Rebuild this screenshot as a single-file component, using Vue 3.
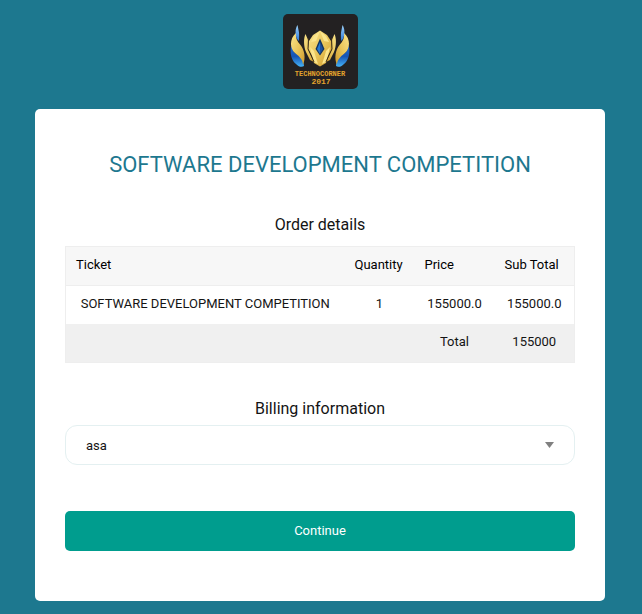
<script setup>
import { ref } from 'vue'

const items = [
  { ticket: 'SOFTWARE DEVELOPMENT COMPETITION', quantity: 1, price: '155000.0', subTotal: '155000.0' }
]
const total = '155000'
const billing = ref('asa')
</script>

<template>
  <main class="page">
    <svg class="logo" viewBox="0 0 75 75" role="img" aria-label="Technocorner 2017">
      <defs>
        <linearGradient id="gold" x1="0" y1="0" x2="1" y2="1">
          <stop offset="0" stop-color="#fbe58c" />
          <stop offset="0.5" stop-color="#eac75c" />
          <stop offset="1" stop-color="#cf9a2c" />
        </linearGradient>
        <linearGradient id="blue" x1="0" y1="0" x2="0" y2="1">
          <stop offset="0" stop-color="#9fd4fa" />
          <stop offset="0.4" stop-color="#2472d8" />
          <stop offset="0.75" stop-color="#1554b4" />
          <stop offset="1" stop-color="#45b4f8" />
        </linearGradient>
        <g id="wing">
          <path fill="url(#blue)" d="M14.500 11 C12 15 12 20 14 25 L16 27 C16 23 16.500 19 15.500 16 Z M8.500 31 C6 39 9 47 13 50 C16 53 19 53.500 21 52 C21 46 17 42 12 39 C9.500 37 9 34 8.500 31 Z" />
          <path fill="url(#gold)" d="M13 19 C6 25 7 35 12 39 C17 43 20 46 20 51 C23 44 21.500 36 17.500 31 C14 27 12.500 24 13 19 Z" />
        </g>
        <g id="helmet-side">
          <path fill="url(#gold)" d="M22.500 20 C20.500 24 20.500 32 23 38 L27 46 L31 48 L28 42 L25 35 L25.500 27 Z" />
          <path fill="#fbe58c" d="M37 17 L31 22 L28 28 L33 27 Z M27 33 L31 37 L33 44 L35 50 L31 48 L29 42 Z" />
          <path fill="none" stroke="#3a2c14" stroke-width="1" d="M25.500 24 L25 35 L28.500 42 L31 48" />
        </g>
      </defs>
      <rect width="75" height="75" rx="5" fill="#232122" />
      <use href="#wing" />
      <use href="#wing" transform="matrix(-1 0 0 1 74 0)" />
      <path fill="url(#gold)" d="M37 16.500 L44 21 L48 27 L49 35 L45.500 41 L43 49 L37 52.500 L31 49 L28.500 41 L25 35 L26 27 L30 21 Z" />
      <use href="#helmet-side" />
      <use href="#helmet-side" transform="matrix(-1 0 0 1 74 0)" />
      <path fill="#14345e" d="M37 24.500 L41.500 35 L37 41.500 L32.500 35 Z" />
      <path fill="#2477d1" d="M37 28 L37 40 L34 35 Z" />
      <path fill="#1a4fa0" d="M37 28 L40 35 L37 40 Z" />
      <text class="logo-text" x="37" y="62" text-anchor="middle">TECHNOCORNER</text>
      <text class="logo-text logo-year" x="38" y="70" text-anchor="middle">2017</text>
    </svg>

    <form class="card" @submit.prevent>
      <h1>SOFTWARE DEVELOPMENT COMPETITION</h1>

      <h2 id="order-title">Order details</h2>
      <table aria-labelledby="order-title">
        <colgroup>
          <col />
          <col class="col-quantity" />
          <col class="col-price" />
          <col class="col-price" />
        </colgroup>
        <thead>
          <tr>
            <th scope="col">Ticket</th>
            <th scope="col">Quantity</th>
            <th scope="col">Price</th>
            <th scope="col">Sub Total</th>
          </tr>
        </thead>
        <tbody>
          <tr v-for="item in items" :key="item.ticket">
            <td>{{ item.ticket }}</td>
            <td>{{ item.quantity }}</td>
            <td>{{ item.price }}</td>
            <td>{{ item.subTotal }}</td>
          </tr>
        </tbody>
        <tfoot>
          <tr>
            <td></td>
            <td></td>
            <td>Total</td>
            <td>{{ total }}</td>
          </tr>
        </tfoot>
      </table>

      <label class="billing-title" for="billing">Billing information</label>
      <div class="select-box">
        <select id="billing" v-model="billing">
          <option value="asa">asa</option>
        </select>
        <svg class="arrow" viewBox="0 0 9 6" aria-hidden="true">
          <path d="M0 0 H9 L4.500 6 Z" fill="#808080" />
        </svg>
      </div>

      <button type="submit">Continue</button>
    </form>
  </main>
</template>

<style>
body {
  background: #1d788f;
}
</style>

<style scoped>
.page {
  display: flex;
  flex-direction: column;
  align-items: center;
  gap: 20px;
  padding: 14px 37px 13px 35px;
  color: #141414;
  font-family: Roboto, sans-serif;
  font-size: 13px;
  line-height: 18px;
}

.logo {
  display: block;
  width: 75px;
  height: 75px;
}

.logo-text {
  fill: #e3a32c;
  font: bold 7px "Liberation Mono", monospace;
}

.logo-year {
  font-size: 8px;
}

.card {
  box-sizing: border-box;
  display: flex;
  flex-direction: column;
  width: 100%;
  max-width: 570px;
  padding: 40px 30px 50px;
  border-radius: 5px;
  background: #fff;
}

h1 {
  margin: 0 0 32px;
  color: #1d788f;
  font-size: 22px;
  font-weight: 400;
  line-height: 32px;
  text-align: center;
}

h2,
.billing-title {
  margin: 0;
  font-size: 16px;
  font-weight: 400;
  line-height: 24px;
  text-align: center;
}

h2 {
  margin-bottom: 9px;
}

table {
  width: 100%;
  margin-bottom: 34px;
  border: 1px solid #eee;
  border-collapse: collapse;
  table-layout: fixed;
}

.col-quantity {
  width: 70px;
}

.col-price {
  width: 80px;
}

th,
td {
  padding: 9px 0 11px;
  font-weight: 400;
  text-align: center;
}

th {
  padding-left: 10px;
  text-align: left;
}

thead tr {
  border-bottom: 1px solid #eee;
  background: #f7f7f7;
  color: #000;
}

tfoot tr {
  background: #f0f0f0;
}

.select-box {
  display: grid;
  align-items: center;
  margin: 4px 0 46px;
}

select {
  grid-area: 1 / 1;
  width: 100%;
  height: 40px;
  padding: 2px 40px 0 20px;
  border: 1px solid #e4f0f1;
  border-radius: 12px;
  appearance: none;
  background: #fff;
  color: #141414;
  font: inherit;
}

.arrow {
  grid-area: 1 / 1;
  justify-self: end;
  width: 9px;
  height: 6px;
  margin-right: 21px;
  pointer-events: none;
}

button {
  height: 40px;
  border: 0;
  border-radius: 5px;
  background: #009d8e;
  color: #fff;
  font: inherit;
  cursor: pointer;
}
</style>
